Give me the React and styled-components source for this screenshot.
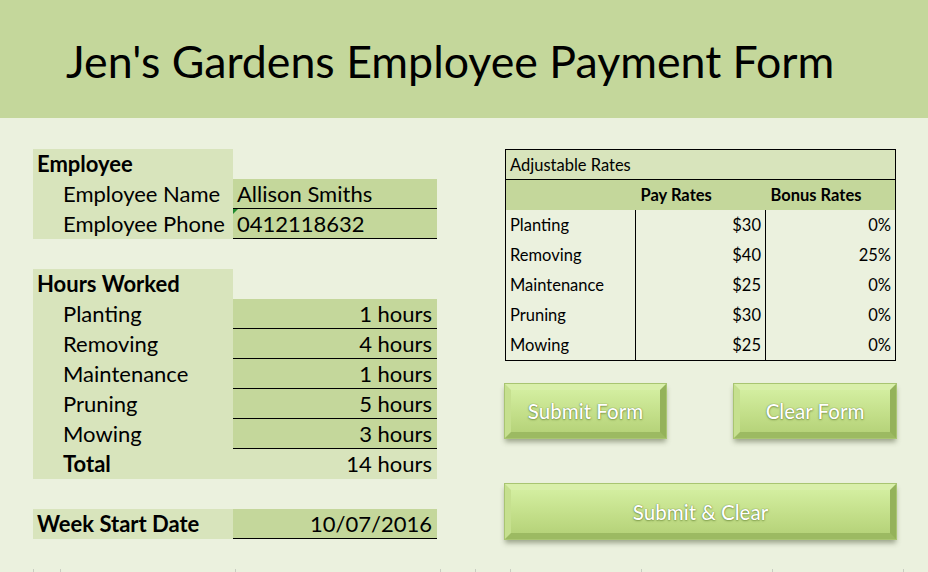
import React from "react";
import styled, { createGlobalStyle } from "styled-components";

const GlobalStyle = createGlobalStyle`
  html, body {
    margin: 0;
    padding: 0;
    background: #ebf1de;
  }
  body {
    font-family: Lato, "Open Sans", sans-serif;
    color: #000;
  }
`;

const Page = styled.div`
  width: 928px;
  height: 572px;
  display: flex;
  flex-direction: column;
  background: #ebf1de;
  overflow: hidden;
`;

const Banner = styled.header`
  height: 118px;
  background: #c4d79b;
  display: flex;
  align-items: center;
  padding-left: 66px;
  box-sizing: border-box;
`;

const Title = styled.h1`
  margin: 3px 0 0 0;
  font-family: Lato, "Open Sans", sans-serif;
  font-weight: 400;
  font-size: 44.7px;
`;

const Main = styled.main`
  display: flex;
  gap: 68px;
  padding: 31px 0 0 33px;
`;

const FormSheet = styled.section`
  width: 404px;
  display: flex;
  flex-direction: column;
`;

const Row = styled.div`
  display: grid;
  grid-template-columns: 200px 204px;
  height: 30px;
`;

const Spacer = styled.div`
  height: 30px;
`;

const Label = styled.div`
  background: #d8e4bc;
  font-size: 22px;
  font-weight: ${(p) => (p.$bold ? 700 : 400)};
  padding-left: ${(p) => (p.$indent ? "30px" : "4px")};
  line-height: 29px;
  white-space: nowrap;
`;

const Value = styled.div`
  position: relative;
  box-sizing: border-box;
  height: 30px;
  background: ${(p) =>
    p.$tone === "light" ? "#d8e4bc" : p.$tone === "none" ? "transparent" : "#c4d79b"};
  border-bottom: ${(p) => (p.$line ? "1px solid #000" : "none")};
  font-size: 22px;
  line-height: 29px;
  text-align: ${(p) => (p.$right ? "right" : "left")};
  padding: 0 5px 0 4px;
  white-space: nowrap;
`;

const Marker = styled.span`
  position: absolute;
  left: 0;
  top: 0;
  width: 0;
  height: 0;
  border-top: 5px solid #1f8a2e;
  border-right: 5px solid transparent;
`;

const Side = styled.section`
  width: 391px;
  display: flex;
  flex-direction: column;
`;

const Rates = styled.table`
  width: 391px;
  border-collapse: collapse;
  border: 1px solid #000;
  font-size: 16.5px;
  table-layout: fixed;
`;

const Caption = styled.td`
  background: #d8e4bc;
  height: 29px;
  padding: 0 4px;
  border-bottom: 1px solid #000;
`;

const HeadCell = styled.th`
  background: #c4d79b;
  height: 30px;
  padding: 0 5px;
  text-align: left;
  font-weight: 700;
`;

const Cell = styled.td`
  height: 30px;
  padding: 0 4px;
  text-align: ${(p) => (p.$right ? "right" : "left")};
  border-left: ${(p) => (p.$divide ? "1px solid #000" : "none")};
`;

const ButtonRow = styled.div`
  display: flex;
  justify-content: space-between;
  margin-top: ${(p) => p.$top}px;
`;

const Bevel = styled.button`
  width: ${(p) => p.$w}px;
  height: ${(p) => p.$h}px;
  box-sizing: border-box;
  border-style: solid;
  border-width: 6px;
  border-color: #d9efaa #94b25a #9cba62 #c6e08f;
  outline: 1px solid #a9c572;
  background: linear-gradient(#d3eea0, #c2de88 60%, #b6d37a);
  box-shadow: 0 4px 5px rgba(60, 70, 40, 0.45);
  color: #fff;
  font-family: Lato, "Open Sans", sans-serif;
  font-size: 20.5px;
  font-weight: 500;
  text-shadow: 0 0 1px rgba(70, 100, 30, 0.9), 0 1px 2px rgba(90, 120, 40, 0.6);
  padding: 0;
  cursor: pointer;
`;

const Ticks = styled.div`
  margin-top: auto;
  height: 3px;
  display: flex;
`;

const Tick = styled.span`
  width: ${(p) => p.$w}px;
  border-right: 1px solid #c9cdc2;
`;

const hours = [
  ["Planting", "1 hours"],
  ["Removing", "4 hours"],
  ["Maintenance", "1 hours"],
  ["Pruning", "5 hours"],
  ["Mowing", "3 hours"],
];

const rates = [
  ["Planting", "$30", "0%"],
  ["Removing", "$40", "25%"],
  ["Maintenance", "$25", "0%"],
  ["Pruning", "$30", "0%"],
  ["Mowing", "$25", "0%"],
];

const tickWidths = [33, 26, 174, 204, 34, 34, 130, 130, 130];

export default function App() {
  return (
    <Page>
      <GlobalStyle />
      <Banner>
        <Title>Jen's Gardens Employee Payment Form</Title>
      </Banner>
      <Main>
        <FormSheet>
          <Row>
            <Label $bold>Employee</Label>
            <Value $tone="none" />
          </Row>
          <Row>
            <Label $indent>Employee Name</Label>
            <Value $line>Allison Smiths</Value>
          </Row>
          <Row>
            <Label $indent>Employee Phone</Label>
            <Value $line>
              <Marker />
              0412118632
            </Value>
          </Row>
          <Spacer />
          <Row>
            <Label $bold>Hours Worked</Label>
            <Value $tone="none" />
          </Row>
          {hours.map(([name, h]) => (
            <Row key={name}>
              <Label $indent>{name}</Label>
              <Value $line $right>
                {h}
              </Value>
            </Row>
          ))}
          <Row>
            <Label $indent $bold>
              Total
            </Label>
            <Value $tone="light" $right>
              14 hours
            </Value>
          </Row>
          <Spacer />
          <Row>
            <Label $bold>Week Start Date</Label>
            <Value $line $right>
              10/07/2016
            </Value>
          </Row>
        </FormSheet>
        <Side>
          <Rates>
            <tbody>
              <tr>
                <Caption colSpan={3}>Adjustable Rates</Caption>
              </tr>
              <tr>
                <HeadCell />
                <HeadCell>Pay Rates</HeadCell>
                <HeadCell>Bonus Rates</HeadCell>
              </tr>
              {rates.map(([name, pay, bonus]) => (
                <tr key={name}>
                  <Cell>{name}</Cell>
                  <Cell $divide $right>
                    {pay}
                  </Cell>
                  <Cell $divide $right>
                    {bonus}
                  </Cell>
                </tr>
              ))}
            </tbody>
          </Rates>
          <ButtonRow $top={23}>
            <Bevel $w={161} $h={54}>Submit Form</Bevel>
            <Bevel $w={162} $h={54}>Clear Form</Bevel>
          </ButtonRow>
          <ButtonRow $top={46}>
            <Bevel $w={391} $h={55}>Submit &amp; Clear</Bevel>
          </ButtonRow>
        </Side>
      </Main>
      <Ticks>
        {tickWidths.map((w, i) => (
          <Tick key={i} $w={w} />
        ))}
      </Ticks>
    </Page>
  );
}
